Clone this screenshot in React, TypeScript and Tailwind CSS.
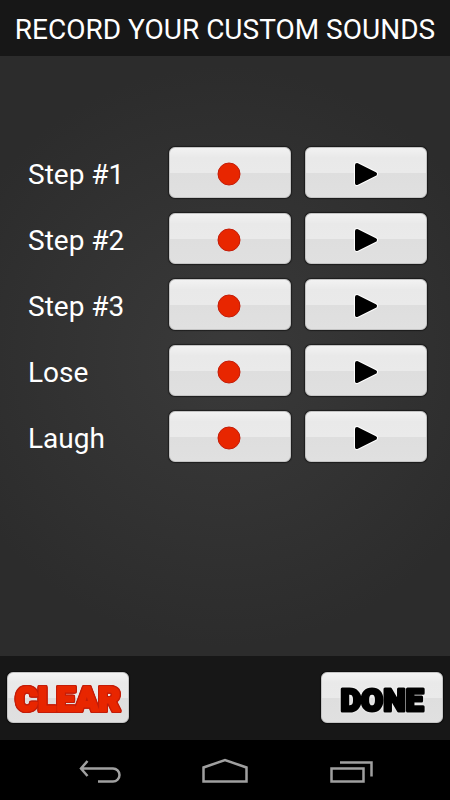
import type { ReactNode } from "react";

const sounds = ["Step #1", "Step #2", "Step #3", "Lose", "Laugh"];

type GlossButtonProps = { label?: string; children: ReactNode };

function GlossButton({ label, children }: GlossButtonProps) {
  return (
    <button
      type="button"
      aria-label={label}
      className="flex h-[51px] w-[122px] items-center justify-center rounded-md border border-[#c4c4c4] bg-[linear-gradient(#f2f2f2_0%,#e9e9e9_20%,#eaeaea_51%,#dedede_51%,#e0e0e0_100%)] shadow-[0_0_1px_1px_rgba(0,0,0,0.45)]"
    >
      {children}
    </button>
  );
}

function RecordIcon() {
  return (
    <svg className="mr-0.5 mt-0.5 size-6" viewBox="0 0 24 24" aria-hidden="true">
      <circle cx="12" cy="12" r="11" fill="#e82600" stroke="#c41c08" />
    </svg>
  );
}

function PlayIcon() {
  const triangle = "M5 3 L23 12 L5 21 Z";
  return (
    <svg className="mt-0.5 h-6 w-7 overflow-visible" viewBox="0 0 28 24" aria-hidden="true">
      <path d={triangle} fill="#fff" stroke="#fff" strokeWidth="6" strokeLinejoin="round" />
      <path d={triangle} fill="#000" stroke="#000" strokeWidth="4" strokeLinejoin="round" />
    </svg>
  );
}

function CartoonText({ className, children }: { className: string; children: string }) {
  return (
    <svg
      className={`h-10 w-[118px] overflow-visible font-black ${className}`}
      viewBox="0 0 118 40"
      fill="currentColor"
      stroke="currentColor"
      strokeLinejoin="round"
    >
      <text x="59" y="33" textAnchor="middle">
        {children}
      </text>
    </svg>
  );
}

function NavButton({ label, children }: { label: string; children: ReactNode }) {
  return (
    <button type="button" aria-label={label} className="flex flex-1 items-center justify-center">
      <svg
        className="h-7 w-12"
        viewBox="0 0 48 28"
        fill="none"
        stroke="#a0a0a0"
        strokeWidth="2.5"
        aria-hidden="true"
      >
        {children}
      </svg>
    </button>
  );
}

export default function App() {
  return (
    <div className="flex min-h-screen flex-col bg-black font-[Roboto,sans-serif] text-white">
      <header className="flex h-14 items-center justify-center bg-[#171717] pt-1">
        <h1 className="whitespace-nowrap text-[28px] leading-8">RECORD YOUR CUSTOM SOUNDS</h1>
      </header>

      <main className="flex-1 bg-[radial-gradient(circle_at_center,#3a3a3a_0,#2c2c2c_290px)] pt-[91px]">
        <ul className="flex flex-col gap-[15px] pl-7 pr-[23px]">
          {sounds.map((name) => (
            <li key={name} className="flex items-center gap-3.5">
              <span className="flex-1 pt-1 text-[28px] leading-8">{name}</span>
              <GlossButton label={`Record ${name}`}>
                <RecordIcon />
              </GlossButton>
              <GlossButton label={`Play ${name}`}>
                <PlayIcon />
              </GlossButton>
            </li>
          ))}
        </ul>
      </main>

      <footer className="flex h-21 justify-between bg-[#171717] px-[7px] pt-4">
        <GlossButton>
          <CartoonText className="stroke-2 text-[34px] text-[#e82600] [filter:drop-shadow(1px_0_0_#c41c08)_drop-shadow(-1px_0_0_#c41c08)_drop-shadow(0_1px_0_#c41c08)_drop-shadow(0_-1px_0_#c41c08)]">
            CLEAR
          </CartoonText>
        </GlossButton>
        <GlossButton>
          <CartoonText className="stroke-3 text-[32px] text-black [filter:drop-shadow(0_0_1px_#fff)]">
            DONE
          </CartoonText>
        </GlossButton>
      </footer>

      <nav aria-label="System" className="flex h-15 bg-black px-[38px]">
        <NavButton label="Back">
          <path d="M11.5 5 L5 12.5 L11.5 20 M5 12.5 H37 A6.5 6.5 0 0 1 37 25.5 H22" />
        </NavButton>
        <NavButton label="Home">
          <path d="M2.5 25.5 V11.5 L24 4 L45.5 11.5 V25.5 Z" />
        </NavButton>
        <NavButton label="Recent apps">
          <path d="M5.5 12.5 H37.5 V25.5 H5.5 Z M14 6.5 H45.5 V20.5" />
        </NavButton>
      </nav>
    </div>
  );
}
